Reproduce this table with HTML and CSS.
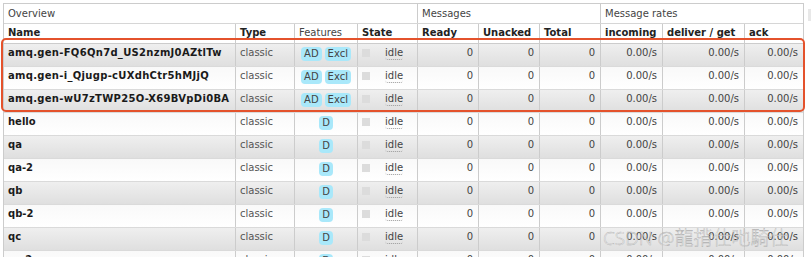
FILE: index.html
```html
<!DOCTYPE html>
<html>
<head>
<meta charset="utf-8">
<title>Queues</title>
<link rel="stylesheet" href="styles.css">
</head>
<body>
<div class="page">
  <div class="queues">
    <div class="row head-group">
      <div class="cell span-4">Overview</div>
      <div class="cell span-3">Messages</div>
      <div class="cell span-3">Message rates</div>
    </div>
    <div class="row head-cols">
      <div class="cell">Name</div>
      <div class="cell">Type</div>
      <div class="cell plain">Features</div>
      <div class="cell">State</div>
      <div class="cell">Ready</div>
      <div class="cell">Unacked</div>
      <div class="cell">Total</div>
      <div class="cell">incoming</div>
      <div class="cell">deliver / get</div>
      <div class="cell">ack</div>
    </div>

    <div class="row data alt1">
      <div class="cell name long">amq.gen-FQ6Qn7d_US2nzmJ0AZtlTw</div>
      <div class="cell type">classic</div>
      <div class="cell features"><abbr class="tag">AD</abbr><abbr class="tag">Excl</abbr></div>
      <div class="cell state"><span class="status"></span><span class="idle">idle</span></div>
      <div class="cell num">0</div>
      <div class="cell num">0</div>
      <div class="cell num">0</div>
      <div class="cell num">0.00/s</div>
      <div class="cell num">0.00/s</div>
      <div class="cell num">0.00/s</div>
    </div>
    <div class="row data alt2">
      <div class="cell name long">amq.gen-i_Qjugp-cUXdhCtr5hMJjQ</div>
      <div class="cell type">classic</div>
      <div class="cell features"><abbr class="tag">AD</abbr><abbr class="tag">Excl</abbr></div>
      <div class="cell state"><span class="status"></span><span class="idle">idle</span></div>
      <div class="cell num">0</div>
      <div class="cell num">0</div>
      <div class="cell num">0</div>
      <div class="cell num">0.00/s</div>
      <div class="cell num">0.00/s</div>
      <div class="cell num">0.00/s</div>
    </div>
    <div class="row data alt1">
      <div class="cell name long">amq.gen-wU7zTWP25O-X69BVpDi0BA</div>
      <div class="cell type">classic</div>
      <div class="cell features"><abbr class="tag">AD</abbr><abbr class="tag">Excl</abbr></div>
      <div class="cell state"><span class="status"></span><span class="idle">idle</span></div>
      <div class="cell num">0</div>
      <div class="cell num">0</div>
      <div class="cell num">0</div>
      <div class="cell num">0.00/s</div>
      <div class="cell num">0.00/s</div>
      <div class="cell num">0.00/s</div>
    </div>
    <div class="row data alt2">
      <div class="cell name">hello</div>
      <div class="cell type">classic</div>
      <div class="cell features"><abbr class="tag">D</abbr></div>
      <div class="cell state"><span class="status"></span><span class="idle">idle</span></div>
      <div class="cell num">0</div>
      <div class="cell num">0</div>
      <div class="cell num">0</div>
      <div class="cell num">0.00/s</div>
      <div class="cell num">0.00/s</div>
      <div class="cell num">0.00/s</div>
    </div>
    <div class="row data alt1">
      <div class="cell name">qa</div>
      <div class="cell type">classic</div>
      <div class="cell features"><abbr class="tag">D</abbr></div>
      <div class="cell state"><span class="status"></span><span class="idle">idle</span></div>
      <div class="cell num">0</div>
      <div class="cell num">0</div>
      <div class="cell num">0</div>
      <div class="cell num">0.00/s</div>
      <div class="cell num">0.00/s</div>
      <div class="cell num">0.00/s</div>
    </div>
    <div class="row data alt2">
      <div class="cell name">qa-2</div>
      <div class="cell type">classic</div>
      <div class="cell features"><abbr class="tag">D</abbr></div>
      <div class="cell state"><span class="status"></span><span class="idle">idle</span></div>
      <div class="cell num">0</div>
      <div class="cell num">0</div>
      <div class="cell num">0</div>
      <div class="cell num">0.00/s</div>
      <div class="cell num">0.00/s</div>
      <div class="cell num">0.00/s</div>
    </div>
    <div class="row data alt1">
      <div class="cell name">qb</div>
      <div class="cell type">classic</div>
      <div class="cell features"><abbr class="tag">D</abbr></div>
      <div class="cell state"><span class="status"></span><span class="idle">idle</span></div>
      <div class="cell num">0</div>
      <div class="cell num">0</div>
      <div class="cell num">0</div>
      <div class="cell num">0.00/s</div>
      <div class="cell num">0.00/s</div>
      <div class="cell num">0.00/s</div>
    </div>
    <div class="row data alt2">
      <div class="cell name">qb-2</div>
      <div class="cell type">classic</div>
      <div class="cell features"><abbr class="tag">D</abbr></div>
      <div class="cell state"><span class="status"></span><span class="idle">idle</span></div>
      <div class="cell num">0</div>
      <div class="cell num">0</div>
      <div class="cell num">0</div>
      <div class="cell num">0.00/s</div>
      <div class="cell num">0.00/s</div>
      <div class="cell num">0.00/s</div>
    </div>
    <div class="row data alt1">
      <div class="cell name">qc</div>
      <div class="cell type">classic</div>
      <div class="cell features"><abbr class="tag">D</abbr></div>
      <div class="cell state"><span class="status"></span><span class="idle">idle</span></div>
      <div class="cell num">0</div>
      <div class="cell num">0</div>
      <div class="cell num">0</div>
      <div class="cell num">0.00/s</div>
      <div class="cell num">0.00/s</div>
      <div class="cell num">0.00/s</div>
    </div>
    <div class="row data alt2">
      <div class="cell name">qc-2</div>
      <div class="cell type">classic</div>
      <div class="cell features"><abbr class="tag">D</abbr></div>
      <div class="cell state"><span class="status"></span><span class="idle">idle</span></div>
      <div class="cell num">0</div>
      <div class="cell num">0</div>
      <div class="cell num">0</div>
      <div class="cell num">0.00/s</div>
      <div class="cell num">0.00/s</div>
      <div class="cell num">0.00/s</div>
    </div>
  </div>
  <span class="plus-minus">+/-</span>
</div>
<div class="highlight"></div>
<div class="watermark">CSDN @龍揹仕吔騎仕</div>
</body>
</html>
```

FILE: styles.css
```css
html, body {
  margin: 0;
  padding: 0;
  overflow: hidden;
  background: #fff;
}
body {
  position: relative;
  width: 811px;
  height: 257px;
  font-family: Verdana, "DejaVu Sans", sans-serif;
  font-size: 10px;
  line-height: 12px;
  color: #444;
}
.page {
  display: flex;
  align-items: flex-start;
  gap: 4px;
  padding: 3px 0 0 3px;
}
.queues {
  flex: none;
  border: 1px solid #ccc;
  border-bottom: none;
}
.row {
  display: grid;
  grid-template-columns: 231px 59px 63px 60px 61px 61px 61px 62px 82px 59px;
  box-sizing: border-box;
}
.cell {
  box-sizing: border-box;
  padding: 3px 4px 0;
  white-space: nowrap;
}
.cell + .cell {
  border-left: 1px solid #ccc;
}
.span-4 { grid-column: span 4; }
.span-3 { grid-column: span 3; }

.head-group {
  height: 20px;
  border-bottom: 1px solid #d6d6d6;
  background: #fff;
}
.head-group .cell {
  padding-top: 4px;
  color: #444;
}
.head-cols {
  height: 20px;
  border-bottom: 1px solid #ccc;
  background: #fff;
}
.head-cols .cell {
  font-weight: bold;
  color: #222;
}
.head-cols .cell.plain {
  font-weight: normal;
  color: #444;
}
.data {
  height: 23px;
  border-bottom: 1px solid #dadada;
}
.alt1 {
  background: linear-gradient(#efefef, #dfdfdf);
}
.alt2 {
  background: linear-gradient(#f9f9f9, #ffffff);
}
.name {
  font-weight: bold;
  color: #1a1a1a;
}
.name.long {
  letter-spacing: 0.3px;
}
.type {
  color: #555;
}
.features {
  display: flex;
  justify-content: center;
  align-items: flex-start;
  gap: 3px;
}
.tag {
  display: block;
  padding: 1px 3px;
  border-radius: 4px;
  background: #a9e8fa;
  color: #444;
  text-decoration: none;
}
.state {
  display: flex;
  align-items: flex-start;
}
.status {
  width: 8px;
  height: 8px;
  margin-top: 2px;
  background: #dcdcdc;
}
.idle {
  margin-left: 15px;
  color: #444;
  border-bottom: 1px dotted #999;
  border-radius: 3px;
}
.num {
  text-align: right;
  padding-right: 5px;
}
.plus-minus {
  flex: none;
  margin-top: 6px;
  padding: 0 3px;
  height: 12px;
  background: #e8e8e8;
  color: #999;
}
.highlight {
  position: absolute;
  left: 1px;
  top: 38px;
  width: 804px;
  height: 74px;
  box-sizing: border-box;
  border: 2px solid #e4522c;
  border-radius: 5px;
}
.watermark {
  position: absolute;
  left: 603px;
  top: 226px;
  font-family: "Noto Sans", "Noto Sans CJK SC", sans-serif;
  font-size: 19px;
  font-weight: 300;
  line-height: 24px;
  color: rgba(255, 255, 255, 0.6);
  -webkit-text-stroke: 0.4px rgba(110, 110, 110, 0.55);
  white-space: nowrap;
}
```
